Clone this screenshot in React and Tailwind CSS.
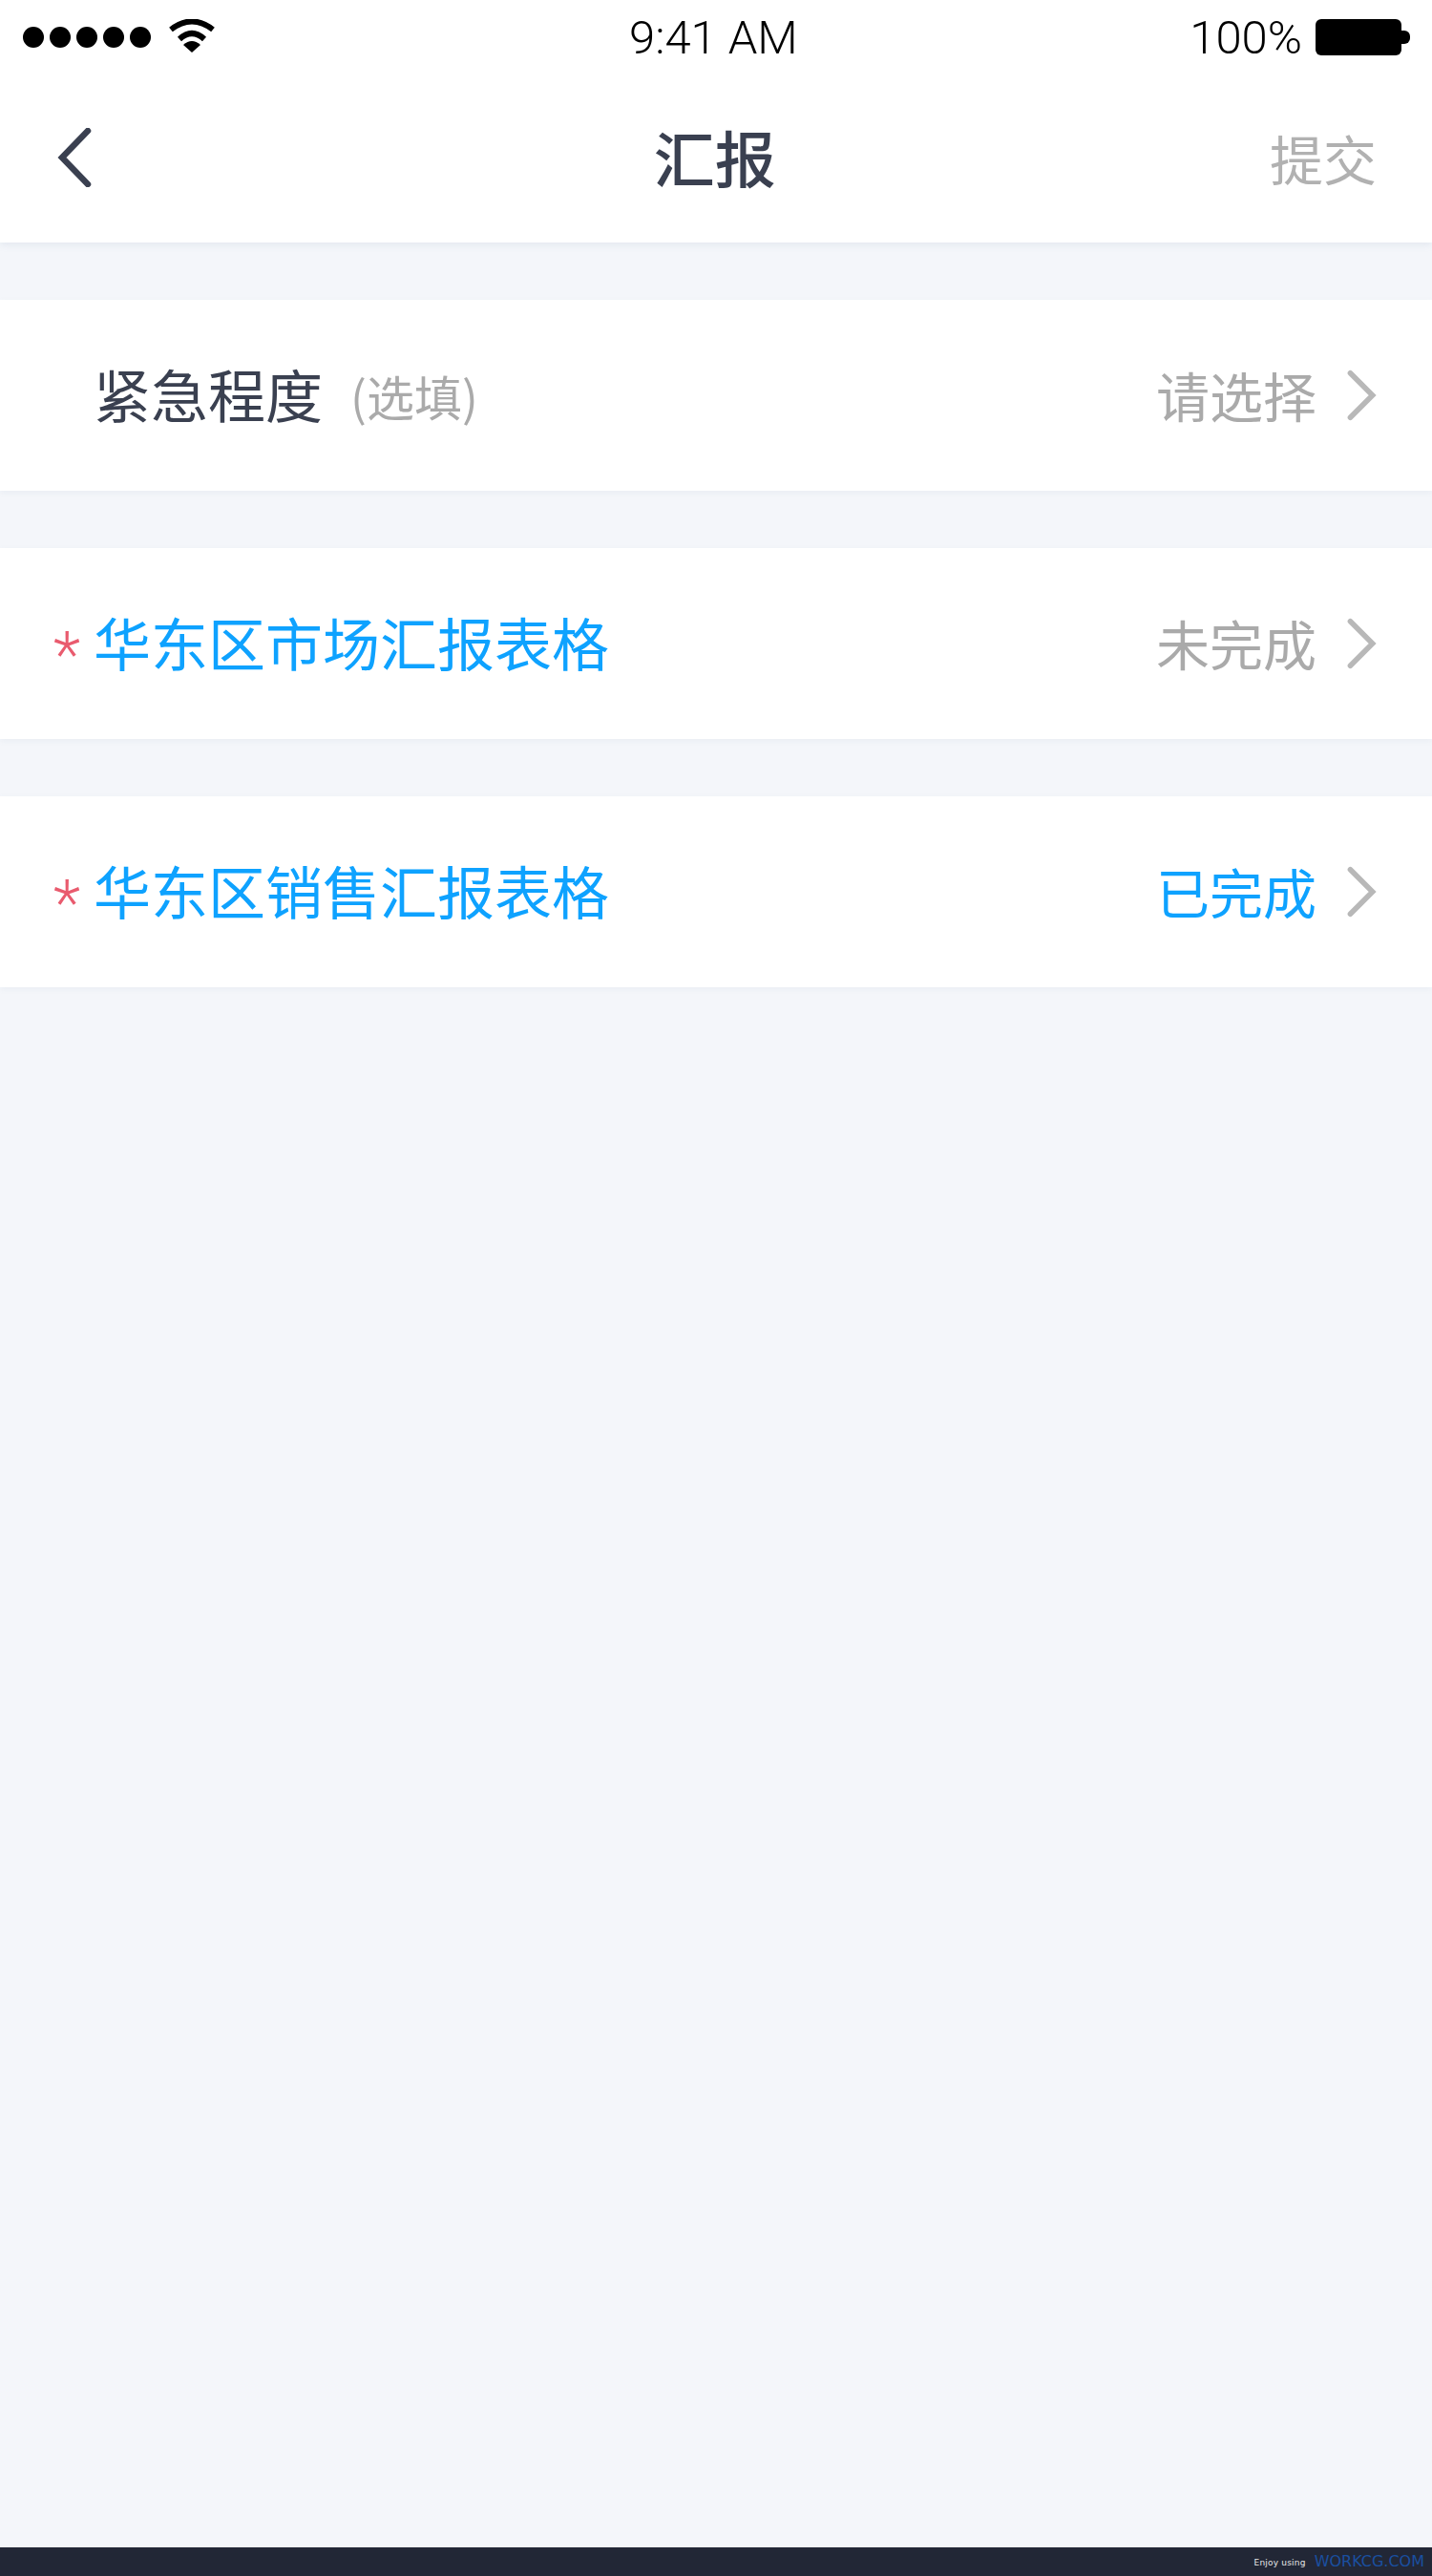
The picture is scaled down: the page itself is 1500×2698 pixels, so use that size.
import { useState } from "react";

const rows = [
  { title: "华东区市场汇报表格", status: "未完成", required: true, done: false },
  { title: "华东区销售汇报表格", status: "已完成", required: true, done: true },
];

function Chevron({ className, d }) {
  return (
    <svg viewBox="0 0 36 62" fill="none" className={className}>
      <path d={d} stroke="currentColor" strokeWidth="6.5" strokeLinecap="round" strokeLinejoin="miter" />
    </svg>
  );
}

function StatusBar() {
  return (
    <div className="relative flex h-[80px] items-start justify-between pt-[16px] pl-[24px] pr-[23px] text-black">
      <div className="flex items-start">
        <div className="mt-[12px] flex gap-[6px]">
          {[0, 1, 2, 3, 4].map((dot) => (
            <span key={dot} className="h-[22px] w-[22px] rounded-full bg-black" />
          ))}
        </div>
        <svg viewBox="0 0 48 35" className="mt-[4px] ml-[19px] h-[35px] w-[48px]" fill="none">
          <path d="M2 11 Q24 -6 46 11" stroke="black" strokeWidth="6" />
          <path d="M11 21 Q24 9 37 21" stroke="black" strokeWidth="6" />
          <path d="M15 27 Q24 19 33 27 L24 35 Z" fill="black" />
        </svg>
      </div>
      <span className="absolute left-1/2 top-[16px] -translate-x-[51.5%] font-['Roboto',sans-serif] text-[49px] leading-[48px] font-light">
        9:41 AM
      </span>
      <div className="flex items-start">
        <span className="font-['Roboto',sans-serif] text-[49px] leading-[48px] font-light">100%</span>
        <div className="mt-[4px] ml-[14px] h-[38px] w-[90px] rounded-[6px] bg-black" />
        <div className="mt-[16px] h-[14px] w-[9px] rounded-r-[6px] bg-black" />
      </div>
    </div>
  );
}

function NavBar() {
  return (
    <header className="relative z-10 bg-white shadow-[0_2px_8px_rgba(120,140,170,0.14)]">
      <StatusBar />
      <div className="flex h-[174px] items-center justify-between pl-[60px] pr-[58px]">
        <Chevron className="mb-[5px] h-[62px] w-[36px] text-[#3a4050]" d="M32 3 L5 31 L32 59" />
        <h1 className="absolute left-1/2 mb-[8px] -translate-x-[51%] text-[64px] font-medium text-[#3a4050]">汇报</h1>
        <button type="button" className="mb-[4px] text-[56px] text-[#b1b1b1]">提交</button>
      </div>
    </header>
  );
}

function Row({ title, status, required, done, hint }) {
  return (
    <div className="flex h-[200px] items-center justify-between bg-white pr-[58px] shadow-[0_2px_6px_rgba(120,140,170,0.08)]">
      <div className="flex items-center pl-[56px]">
        <span className="mt-[26px] w-[42px] font-['Roboto',sans-serif] text-[66px] leading-none font-light text-[#e95b6e]">
          {required ? "*" : ""}
        </span>
        <span className={`mb-[5px] text-[60px] ${hint ? "text-[#3a4050]" : "text-[#0ea2ff]"}`}>{title}</span>
        {hint && <span className="mt-[1px] ml-[29px] text-[50px] text-[#aaaaaa]">{hint}</span>}
      </div>
      <div className="flex items-center gap-[32px]">
        <span className={`mb-[3px] text-[56px] ${done ? "text-[#0ea2ff]" : "text-[#aaaaaa]"}`}>{status}</span>
        <Chevron className="h-[54px] w-[31px] text-[#b8b8b8]" d="M4 4 L31 31 L4 58" />
      </div>
    </div>
  );
}

export default function App() {
  const [items] = useState(rows);

  return (
    <div className="flex min-h-screen flex-col bg-[#f4f6fa] font-['Noto_Sans_CJK_SC',sans-serif]">
      <NavBar />
      <main className="flex flex-1 flex-col gap-[60px] pt-[60px]">
        <Row title="紧急程度" hint="(选填)" status="请选择" />
        {items.map((row) => (
          <Row key={row.title} {...row} />
        ))}
      </main>
      <footer className="flex h-[30px] items-center justify-end gap-[9px] bg-[#222736] pr-[8px] font-['DejaVu_Sans',sans-serif]">
        <span className="mt-[4px] text-[9px] tracking-[0.2px] text-[#e8e8e8]">Enjoy using</span>
        <span className="text-[16px] text-[#1a4fa0]">WORKCG.COM</span>
      </footer>
    </div>
  );
}
